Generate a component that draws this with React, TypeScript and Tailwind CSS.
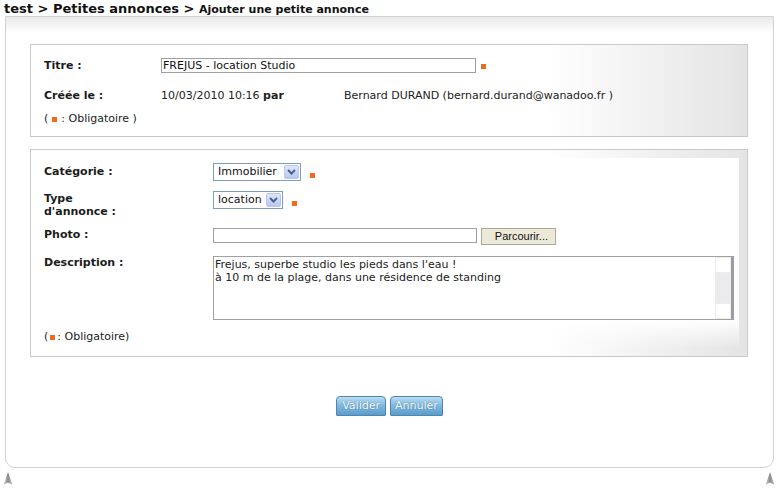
import React from "react";

const Req = () => <span className="inline-block w-[5px] h-[5px] bg-[#ee6a1f]" />;

const Select = ({ value, width }: { value: string; width: string }) => (
  <div className={`flex items-center h-[18px] border border-[#7f9db9] bg-white ${width}`}>
    <span className="flex-1 pl-[4px] text-[11px] leading-[16px] text-[#111]">{value}</span>
    <span className="flex items-center justify-center w-[15px] h-[14px] mr-[1px] rounded-[2px] border border-[#b8c8ea] bg-[linear-gradient(to_bottom,#dde6fb,#b7c9f2)]">
      <svg width="9" height="6" viewBox="0 0 9 6">
        <path d="M1 1 L4.5 4.5 L8 1" fill="none" stroke="#4d6185" strokeWidth="2" />
      </svg>
    </span>
  </div>
);

const Arrow = () => (
  <svg width="10" height="14" viewBox="0 0 10 14">
    <defs>
      <linearGradient id="ag" x1="0" x2="1" y1="0" y2="0">
        <stop offset="0" stopColor="#d8d8d8" />
        <stop offset="0.5" stopColor="#8a8a8a" />
        <stop offset="1" stopColor="#c4c4c4" />
      </linearGradient>
    </defs>
    <polygon points="5,0 9.5,13 5,10.5 0.5,13" fill="url(#ag)" />
  </svg>
);

export default function App() {
  return (
    <div className="w-[783px] h-[489px] bg-white font-['DejaVu_Sans',Verdana,sans-serif] text-[#1c1c1c] overflow-hidden">
      <div className="h-[16px] pl-[4px] pt-[1px] font-bold text-[13px] leading-[15px] text-[#111]">
        test &gt; Petites annonces &gt; <span className="text-[11px]">Ajouter une petite annonce</span>
      </div>

      <div className="ml-[5px] w-[769px] h-[452px] border border-[#d2d2d2] rounded-b-[10px] bg-[linear-gradient(to_bottom,#e8e8e8,#ffffff_16px)] pl-[24px] pt-[27px]">
        {/* panel 1 */}
        <div className="w-[718px] h-[93px] border border-[#c9c9c9] bg-[linear-gradient(to_right,#ffffff_72%,#e4e4e4)] pl-[13px] pt-[13px]">
          <div className="flex items-start h-[31px]">
            <div className="w-[117px] font-bold text-[11px] leading-[14px] pt-[1px]">Titre :</div>
            <div className="w-[315px] h-[15px] border border-[#a0a0a0] bg-white text-[11px] leading-[13px] pl-[1px] text-[#111]">
              FREJUS - location Studio
            </div>
            <div className="ml-[5px] mt-[6px] flex">
              <Req />
            </div>
          </div>
          <div className="flex items-start h-[23px] text-[11px] leading-[14px]">
            <div className="w-[117px] font-bold leading-[14px]">Créée le :</div>
            <div className="w-[183px] text-[#222]">
              10/03/2010 10:16 <span className="font-bold">par</span>
            </div>
            <div className="text-[#222]">Bernard DURAND (bernard.durand@wanadoo.fr )</div>
          </div>
          <div className="flex items-center gap-[4px] text-[11px] leading-[14px] text-[#222]">
            <span>(</span>
            <Req />
            <span>: Obligatoire )</span>
          </div>
        </div>

        {/* panel 2 */}
        <div className="mt-[12px] w-[718px] h-[208px] border border-[#c9c9c9] bg-[linear-gradient(to_right,#ffffff_72%,#e4e4e4)]">
          <div className="mt-[8px] mr-[8px] h-[190px] bg-[linear-gradient(to_bottom,#ffffff_85%,#ffffff00)] pl-[13px] pt-[5px]">
            <div className="flex items-start h-[28px]">
              <div className="w-[169px] font-bold text-[11px] leading-[14px] pt-[2px]">Catégorie :</div>
              <Select value="Immobilier" width="w-[88px]" />
              <div className="ml-[9px] mt-[10px] flex">
                <Req />
              </div>
            </div>
            <div className="flex items-start h-[37px]">
              <div className="w-[169px] font-bold text-[11px] leading-[13px] pt-[1px]">
                Type
                <br />
                d'annonce :
              </div>
              <Select value="location" width="w-[70px]" />
              <div className="ml-[9px] mt-[10px] flex">
                <Req />
              </div>
            </div>
            <div className="flex items-start h-[28px]">
              <div className="w-[169px] font-bold text-[11px] leading-[14px]">Photo :</div>
              <div className="w-[264px] h-[15px] border border-[#a0a0a0] bg-white" />
              <div className="ml-[4px] w-[75px] h-[17px] border border-[#aca899] bg-[#ece9d8] font-['Liberation_Sans',Arial,sans-serif] text-[11px] leading-[15px] text-right pr-[7px] text-[#111]">
                Parcourir...
              </div>
            </div>
            <div className="flex items-start">
              <div className="w-[169px] font-bold text-[11px] leading-[14px]">Description :</div>
              <div className="flex w-[521px] h-[64px] border border-[#a0a0a0] border-r-[3px] border-r-[#9a9ea3] bg-white">
                <div className="flex-1 pl-[1px] pt-[1px] text-[11px] leading-[13px] text-[#222]">
                  Frejus, superbe studio les pieds dans l'eau !
                  <br />
                  à 10 m de la plage, dans une résidence de standing
                </div>
                <div className="w-[16px] flex flex-col">
                  <div className="h-[16px] border border-[#ededed] bg-white" />
                  <div className="flex-1 bg-[#ebebeb]" />
                  <div className="h-[16px] border border-[#ededed] bg-white" />
                </div>
              </div>
            </div>
            <div className="mt-[10px] flex items-center gap-[2px] text-[11px] leading-[14px] text-[#222]">
              <span>(</span>
              <Req />
              <span>: Obligatoire)</span>
            </div>
          </div>
        </div>

        {/* buttons */}
        <div className="mt-[39px] -ml-[24px] flex justify-center gap-[4px]">
          <div className="h-[20px] px-[5px] rounded-t-[4px] rounded-b-[1px] border border-[#4f86ae] bg-[linear-gradient(to_bottom,#b9dcf1,#7db7de_50%,#5b9ccb)] text-white text-[11px] leading-[18px] [text-shadow:0_0_1px_#2b5f86]">
            Valider
          </div>
          <div className="h-[20px] px-[4px] rounded-t-[4px] rounded-b-[1px] border border-[#4f86ae] bg-[linear-gradient(to_bottom,#b9dcf1,#7db7de_50%,#5b9ccb)] text-white text-[11px] leading-[18px] [text-shadow:0_0_1px_#2b5f86]">
            Annuler
          </div>
        </div>
      </div>

      <div className="flex justify-between px-[3px] pt-[4px] w-[778px]">
        <Arrow />
        <Arrow />
      </div>
    </div>
  );
}
